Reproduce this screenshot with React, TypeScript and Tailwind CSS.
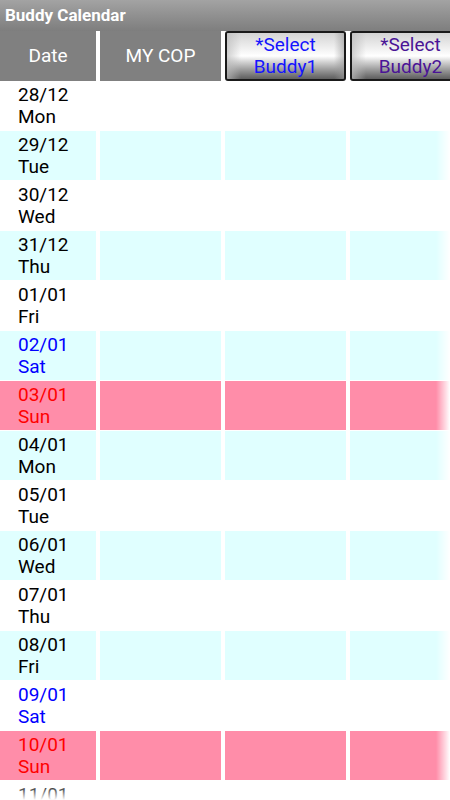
import React from 'react';

interface DayRow {
  date: string;
  day: string;
}

const days: DayRow[] = [
  { date: '28/12', day: 'Mon' },
  { date: '29/12', day: 'Tue' },
  { date: '30/12', day: 'Wed' },
  { date: '31/12', day: 'Thu' },
  { date: '01/01', day: 'Fri' },
  { date: '02/01', day: 'Sat' },
  { date: '03/01', day: 'Sun' },
  { date: '04/01', day: 'Mon' },
  { date: '05/01', day: 'Tue' },
  { date: '06/01', day: 'Wed' },
  { date: '07/01', day: 'Thu' },
  { date: '08/01', day: 'Fri' },
  { date: '09/01', day: 'Sat' },
  { date: '10/01', day: 'Sun' },
  { date: '11/01', day: 'Mon' },
];

// glossy android-style button
const BuddyButton: React.FC<{ label: string; color: string }> = ({ label, color }) => (
  <div className="relative w-[121px] shrink-0 h-full rounded-[3px] border-2 border-[#1a1a1a] bg-gradient-to-b from-[#d4d4d4] via-[#ffffff] to-[#5e5e5e] overflow-hidden">
    <div className="absolute inset-y-0 left-0 w-[14px] bg-gradient-to-r from-[#bdbdbd]/70 to-transparent" />
    <div className="absolute inset-y-0 right-0 w-[10px] bg-gradient-to-l from-[#9a9a9a]/60 to-transparent" />
    <div className={`relative flex flex-col items-center justify-center h-full text-[19px] leading-[22px] ${color}`}>
      <span>*Select</span>
      <span>{label}</span>
    </div>
  </div>
);

const App: React.FC = () => {
  return (
    <div className="relative w-[450px] h-[800px] overflow-hidden bg-white font-['Roboto',sans-serif]">
      {/* title bar */}
      <div className="h-[31px] flex items-center px-[5px] bg-gradient-to-b from-[#a3a3a3] to-[#7e7e7e]">
        <span className="text-white font-bold text-[17px]">Buddy Calendar</span>
      </div>

      {/* header */}
      <div className="flex gap-1 h-[50px] bg-white">
        <div className="w-[96px] shrink-0 bg-[#808080] flex items-center justify-center text-white text-[19px]">Date</div>
        <div className="w-[121px] shrink-0 bg-[#808080] flex items-center justify-center text-white text-[19px]">MY COP</div>
        <BuddyButton label="Buddy1" color="text-[#1414ff]" />
        <BuddyButton label="Buddy2" color="text-[#4a1496]" />
      </div>

      {/* rows */}
      <div className="relative">
        <div className="flex flex-col">
          {days.map((d, i) => {
            const isSun = d.day === 'Sun';
            const isSat = d.day === 'Sat';
            const bg = isSun ? 'bg-[#ff8da9]' : i % 2 === 1 ? 'bg-[#e0ffff]' : 'bg-white';
            const text = isSun ? 'text-[#ff0000]' : isSat ? 'text-[#0000ff]' : 'text-black';
            return (
              <div key={i} className="flex gap-1 h-[49px] mb-px shrink-0">
                <div className={`w-[96px] shrink-0 ${bg} flex flex-col justify-center pl-[18px] text-[19px] leading-[22px] ${text}`}>
                  <span>{d.date}</span>
                  <span>{d.day}</span>
                </div>
                <div className={`w-[121px] shrink-0 ${bg}`} />
                <div className={`w-[121px] shrink-0 ${bg}`} />
                <div className={`w-[121px] shrink-0 ${bg}`} />
              </div>
            );
          })}
        </div>
        {/* fading edge */}
        <div className="absolute top-0 bottom-0 right-0 w-[14px] bg-gradient-to-r from-white/0 to-white" />
      </div>
      <div className="absolute top-[784px] left-0 w-[450px] h-[16px] bg-gradient-to-b from-white/0 to-white" />
    </div>
  );
};

export default App;
